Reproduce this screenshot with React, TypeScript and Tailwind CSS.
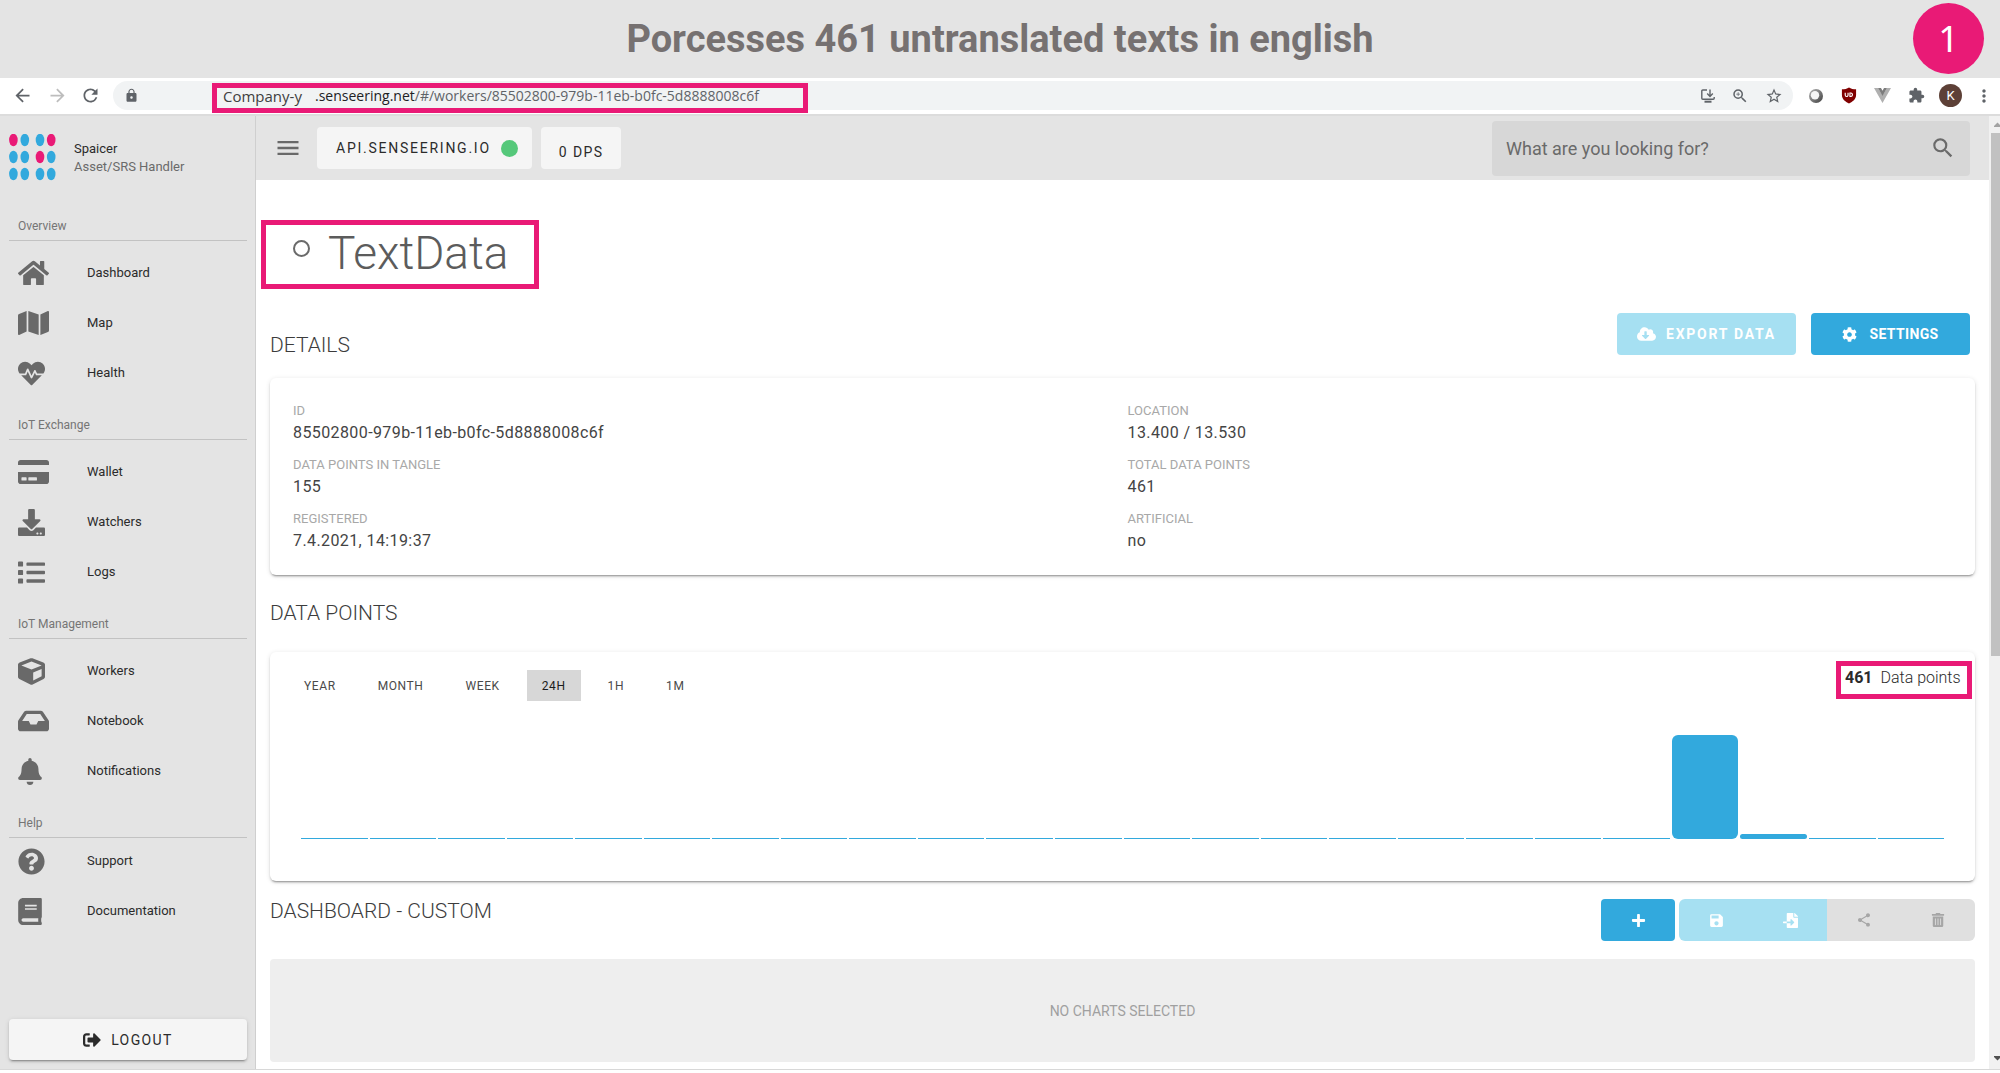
import React from "react";
import {
  FaBell,
  FaBook,
  FaCloudDownloadAlt,
  FaCog,
  FaCreditCard,
  FaCube,
  FaDownload,
  FaFileImport,
  FaHeartbeat,
  FaHome,
  FaInbox,
  FaList,
  FaMap,
  FaPlus,
  FaQuestionCircle,
  FaSignOutAlt,
  FaTrashAlt,
} from "react-icons/fa";
import {
  MdArrowBack,
  MdArrowForward,
  MdExtension,
  MdLock,
  MdMenu,
  MdMoreVert,
  MdRefresh,
  MdSave,
  MdSearch,
  MdShare,
  MdStarBorder,
  MdZoomIn,
} from "react-icons/md";
import type { IconType } from "react-icons";

const PINK = "#e91a76";
const BLUE = "#32a9dd";

type NavItem = { label: string; icon: IconType; size: string };
type NavSection = { title: string; items: NavItem[]; compact?: boolean };

// Icon boxes follow the three glyph proportions of the icon set
const WIDE = "h-[28px] w-[31px]";
const SQUARE = "h-[27px] w-[27px]";
const NARROW = "h-[27px] w-6";

const sections: NavSection[] = [
  {
    title: "Overview",
    items: [
      { label: "Dashboard", icon: FaHome, size: WIDE },
      { label: "Map", icon: FaMap, size: WIDE },
      { label: "Health", icon: FaHeartbeat, size: SQUARE },
    ],
  },
  {
    title: "IoT Exchange",
    items: [
      { label: "Wallet", icon: FaCreditCard, size: WIDE },
      { label: "Watchers", icon: FaDownload, size: SQUARE },
      { label: "Logs", icon: FaList, size: SQUARE },
    ],
  },
  {
    title: "IoT Management",
    items: [
      { label: "Workers", icon: FaCube, size: SQUARE },
      { label: "Notebook", icon: FaInbox, size: WIDE },
      { label: "Notifications", icon: FaBell, size: NARROW },
    ],
  },
  {
    title: "Help",
    compact: true,
    items: [
      { label: "Support", icon: FaQuestionCircle, size: SQUARE },
      { label: "Documentation", icon: FaBook, size: NARROW },
    ],
  },
];

const details = [
  ["ID", "85502800-979b-11eb-b0fc-5d8888008c6f"],
  ["LOCATION", "13.400 / 13.530"],
  ["DATA POINTS IN TANGLE", "155"],
  ["TOTAL DATA POINTS", "461"],
  ["REGISTERED", "7.4.2021, 14:19:37"],
  ["ARTIFICIAL", "no"],
];

const ranges = ["YEAR", "MONTH", "WEEK", "24H", "1H", "1M"];

// Bar heights in pixels, one per hour
const bars = Array.from({ length: 24 }, (_, i) => (i === 20 ? 104 : i === 21 ? 5 : 1));

function Logo() {
  const pink = ["0-0", "0-3", "1-2"];
  return (
    <svg viewBox="0 0 47 47" className="h-[47px] w-[47px]" aria-hidden="true">
      {[6, 23, 40].map((cy, r) =>
        [4.4, 15.8, 31, 42.2].map((cx, c) => (
          <ellipse
            key={`${r}-${c}`}
            cx={cx}
            cy={cy}
            rx="4.3"
            ry="6.2"
            fill={pink.includes(`${r}-${c}`) ? PINK : BLUE}
          />
        ))
      )}
    </svg>
  );
}

function InstallIcon() {
  return (
    <svg viewBox="0 0 14 14" className="h-3.5 w-3.5" fill="none" stroke="currentColor" strokeWidth="1.4">
      <path d="M6 1H1.8a1 1 0 0 0-1 1v7.3a1 1 0 0 0 1 1h10.4a1 1 0 0 0 1-1V8" />
      <path d="M9 .5v6.5M6.2 4.6 9 7.4l2.8-2.8" />
      <path d="M3.5 12.7h7" strokeWidth="2" />
    </svg>
  );
}

function OrbIcon() {
  return (
    <svg viewBox="0 0 16 16" className="h-4 w-4">
      <defs>
        <linearGradient id="orb" x1="0" y1="0" x2="1" y2="1">
          <stop offset="0" stopColor="#b5b5b5" />
          <stop offset="1" stopColor="#3f3f3f" />
        </linearGradient>
      </defs>
      <circle cx="8" cy="8" r="7" fill="url(#orb)" />
      <circle cx="7" cy="7.2" r="4.2" fill="#f5f5f5" />
    </svg>
  );
}

function ShieldIcon() {
  return (
    <svg viewBox="0 0 16 18" className="h-[17px] w-4" fill="none">
      <path d="M8 .5c2 1.4 4.6 2 7.5 2v6c0 4.5-3.5 7-7.5 9-4-2-7.5-4.5-7.5-9v-6c2.9 0 5.5-.6 7.5-2z" fill="#800000" />
      <path d="M4 6v2.6a1.5 1.5 0 0 0 3 0V6M9 6.3v3.7h1.2a1.9 1.9 0 0 0 0-3.7z" stroke="#fff" strokeWidth="1.2" />
    </svg>
  );
}

function VueIcon() {
  return (
    <svg viewBox="0 0 17 15" className="h-[15px] w-[17px]">
      <path d="M0 0h4l4.5 7.5L13 0h4L8.5 15z" fill="#b0b0b0" />
      <path d="M4 0h3l1.5 2.8L10 0h3L8.5 8z" fill="#7d7d7d" />
    </svg>
  );
}

function BrowserBar() {
  return (
    <div className="flex h-[38px] items-center border-b-2 border-[#dcdcdc] bg-white pb-px pl-3 pr-1.5 text-[#5f6368]">
      <button aria-label="Back" className="mr-3.5"><MdArrowBack className="h-[21px] w-[21px]" /></button>
      <button aria-label="Forward" className="mr-3 text-[#bdbdbd]"><MdArrowForward className="h-[21px] w-[21px]" /></button>
      <button aria-label="Reload" className="mr-3"><MdRefresh className="h-[21px] w-[21px]" /></button>
      <div className="relative flex h-[29px] min-w-0 flex-1 items-center rounded-full bg-[#f1f3f4] pl-2.5 pr-2.5">
        <MdLock className="h-[15px] w-[17px]" />
        <div className="absolute left-[99px] top-0.5 flex h-[30px] w-[596px] items-center border-[5px] border-[#e91a76] pb-1 pl-1.5 font-['Open_Sans',sans-serif] whitespace-nowrap">
          <span className="w-[92px] text-[15px] leading-5 text-[#404040]">Company-y</span>
          <span className="text-sm leading-5">
            <span className="text-[#202124]">.senseering.net</span>/#/workers/85502800-979b-11eb-b0fc-5d8888008c6f
          </span>
        </div>
        <div className="ml-auto flex items-center gap-4">
          <button aria-label="Install"><InstallIcon /></button>
          <button aria-label="Zoom"><MdZoomIn className="h-[18px] w-[18px]" /></button>
          <button aria-label="Bookmark"><MdStarBorder className="h-[18px] w-[18px]" /></button>
        </div>
      </div>
      <div className="ml-[15px] flex items-center gap-[17px]">
        <button aria-label="Orb extension"><OrbIcon /></button>
        <button aria-label="Shield extension"><ShieldIcon /></button>
        <button aria-label="Vue extension"><VueIcon /></button>
        <button aria-label="Extensions"><MdExtension className="h-[17px] w-[17px]" /></button>
      </div>
      <button aria-label="Profile" className="ml-3.5 flex h-[23px] w-[23px] items-center justify-center rounded-full bg-[#5d4037] text-[13px] text-white">K</button>
      <button aria-label="Menu" className="ml-3"><MdMoreVert className="h-5 w-5" /></button>
    </div>
  );
}

function Sidebar() {
  return (
    <nav className="flex w-64 shrink-0 flex-col border-r border-[#cfcfcf] bg-[#e4e4e4]">
      <div className="flex h-[83px] items-center pl-[9px]">
        <Logo />
        <div className="ml-[18px] text-[13px] leading-[18px]">
          <div className="text-[#2b2b2b]">Spaicer</div>
          <div className="text-[#6a6a6a]">Asset/SRS Handler</div>
        </div>
      </div>
      {sections.map((s) => (
        <section key={s.title}>
          <h3 className="ml-[9px] mr-2 flex h-[42px] items-end border-b border-[#c2c2c2] pb-1.5 pl-[9px] text-xs leading-4 text-[#757575]">
            {s.title}
          </h3>
          <ul className={s.compact ? "-mt-0.5" : "pt-[7px]"}>
            {s.items.map(({ label, icon: Icon, size }) => (
              <li key={label}>
                <a href={`#${label.toLowerCase()}`} className="flex h-[50px] items-center pl-[18px] text-[13px] text-[#2b2b2b]">
                  <span className="w-[69px] text-[#696969]">
                    <Icon className={size} />
                  </span>
                  {label}
                </a>
              </li>
            ))}
          </ul>
        </section>
      ))}
      <button className="mb-[9px] ml-[9px] mr-2 mt-auto flex h-[41px] items-center justify-center gap-2.5 rounded bg-[#f5f5f5] text-sm tracking-widest text-[#2b2b2b] shadow-[0_3px_1px_-2px_rgba(0,0,0,0.2),0_2px_2px_0_rgba(0,0,0,0.14),0_1px_5px_0_rgba(0,0,0,0.12)]">
        <FaSignOutAlt className="h-[18px] w-[18px]" />
        LOGOUT
      </button>
    </nav>
  );
}

function TopBar() {
  return (
    <header className="flex h-16 items-center bg-[#e4e4e4] pl-[18px] pr-[19px]">
      <button aria-label="Toggle menu" className="mr-[15px] text-[#696969]"><MdMenu className="h-7 w-7" /></button>
      <button className="flex h-[42px] items-center gap-2.5 rounded bg-[#f5f5f5] pl-[19px] pr-3.5 text-sm tracking-[0.125em] text-[#2b2b2b]">
        API.SENSEERING.IO
        <span className="h-[17px] w-[17px] rounded-full bg-[#55c87a]" />
      </button>
      <button className="ml-[9px] h-[42px] rounded bg-[#f5f5f5] px-[18px] pt-2 text-sm tracking-widest text-[#2b2b2b]">
        0 DPS
      </button>
      <div className="ml-auto flex h-[55px] w-[478px] items-center rounded bg-[#d7d7d7] pl-3.5 pr-3.5">
        <input
          type="text"
          aria-label="Search"
          placeholder="What are you looking for?"
          className="h-8 min-w-0 flex-1 bg-transparent text-lg outline-none placeholder:text-[#6a6a6a]"
        />
        <MdSearch className="h-[26px] w-[26px] text-[#6a6a6a]" />
      </div>
    </header>
  );
}

const card =
  "rounded-md bg-white shadow-[0_3px_1px_-2px_rgba(0,0,0,0.2),0_2px_2px_0_rgba(0,0,0,0.14),0_1px_5px_0_rgba(0,0,0,0.12)]";
const heading = "pb-0.5 text-[21px] font-light leading-7 text-[#3c3c3c]";

function Content() {
  return (
    <main className="px-3.5 pb-[7px] pt-10">
      <div className="-ml-[9px] flex h-[69px] w-[278px] items-center border-[5px] border-[#e91a76] pb-1 pl-[27px]">
        <span className="mb-2 h-[17px] w-[17px] rounded-full border-2 border-[#6a6a6a]" />
        <h1 className="ml-[18px] text-[46px] font-light leading-none text-[#5c5c5c]">TextData</h1>
      </div>

      <div className="mt-6 flex h-[65px] items-center">
        <h2 className={heading}>DETAILS</h2>
        <div className="ml-auto mr-[5px] flex gap-[15px] self-start">
          <button disabled className="flex h-[42px] w-[179px] items-center justify-center gap-2.5 rounded bg-[#a6e0f2] text-sm font-bold tracking-[0.125em] text-white">
            <FaCloudDownloadAlt className="h-[18px] w-[19px]" />
            EXPORT DATA
          </button>
          <button className="flex h-[42px] w-[159px] items-center justify-center gap-3 rounded bg-[#32a9dd] text-sm font-bold tracking-wide text-white">
            <FaCog className="h-[15px] w-[15px]" />
            SETTINGS
          </button>
        </div>
      </div>

      <dl className={`${card} grid h-[197px] grid-cols-2 content-start gap-y-3 px-[18px] pt-6`}>
        {details.map(([k, v]) => (
          <div key={k} className="pl-[5px]">
            <dt className="mb-0.5 text-[13px] leading-[18px] text-[#a8a8a8]">{k}</dt>
            <dd className="text-base leading-[22px] tracking-wide text-[#444444]">{v}</dd>
          </div>
        ))}
      </dl>

      <div className="flex h-[77px] items-center">
        <h2 className={heading}>DATA POINTS</h2>
      </div>

      <section className={`${card} relative h-[229px] px-[31px] pt-[18px]`}>
        <div className="-ml-3 flex gap-3">
          {ranges.map((r) => (
            <button
              key={r}
              aria-pressed={r === "24H"}
              className={
                r === "24H"
                  ? "h-[31px] bg-[#d7d7d7] px-[15px] text-xs tracking-wider text-[#1c1c1c]"
                  : "h-[31px] px-[15px] text-xs tracking-wider text-[#4a4a4a]"
              }
            >
              {r}
            </button>
          ))}
        </div>
        <div className="mt-8 flex h-[106px] items-end gap-0.5">
          {bars.map((h, i) => (
            <div key={i} className="flex-1 rounded-md bg-[#32a9dd]" style={{ height: h, borderRadius: h > 1 ? undefined : 0 }} />
          ))}
        </div>
        <p className="absolute right-[3px] top-[9px] h-[38px] w-[136px] border-[5px] border-[#e91a76] pl-1 pt-0.5 text-base font-light leading-5 whitespace-nowrap text-[#2b2b2b]">
          <b className="mr-1 font-bold">461</b> Data points
        </p>
      </section>

      <div className="flex h-[78px] items-start pt-4">
        <h2 className={heading}>DASHBOARD - CUSTOM</h2>
        <div className="ml-auto mt-0.5 flex h-[42px] gap-1">
          <button aria-label="Add chart" className="flex w-[74px] items-center justify-center rounded bg-[#32a9dd] text-white">
            <FaPlus className="h-[15px] w-[15px]" />
          </button>
          <div className="flex overflow-hidden rounded-md">
            <button disabled aria-label="Save" className="flex w-[74px] items-center justify-center bg-[#a6e0f2] text-white">
              <MdSave className="h-[17px] w-[17px]" />
            </button>
            <button disabled aria-label="Import" className="flex w-[74px] items-center justify-center bg-[#a6e0f2] text-white">
              <FaFileImport className="h-[15px] w-[15px]" />
            </button>
            <button disabled aria-label="Share" className="flex w-[74px] items-center justify-center bg-[#e0e0e0] text-[#a6a6a6]">
              <MdShare className="h-4 w-4" />
            </button>
            <button disabled aria-label="Delete" className="flex w-[74px] items-center justify-center bg-[#e0e0e0] text-[#a6a6a6]">
              <FaTrashAlt className="h-3.5 w-3.5" />
            </button>
          </div>
        </div>
      </div>

      <div className="flex h-[103px] items-center justify-center rounded-sm bg-[#eeeeee] text-sm text-[#a0a0a0]">
        NO CHARTS SELECTED
      </div>
    </main>
  );
}

function Scrollbar() {
  return (
    <div className="flex w-[11px] shrink-0 flex-col items-end overflow-hidden bg-[#f1f1f1]" aria-hidden="true">
      <svg viewBox="0 0 6 17" className="h-[17px] w-1.5"><path d="M-1 11h9L3.5 6.5z" fill="#a3a3a3" /></svg>
      <div className="h-[523px] w-[9px] bg-[#c1c1c1]" />
      <svg viewBox="0 0 6 17" className="mb-1 mt-auto h-[17px] w-1.5"><path d="M-1 8h9l-4.5 4.5z" fill="#505050" /></svg>
    </div>
  );
}

export default function App() {
  return (
    <div className="flex min-h-screen flex-col bg-white font-['Roboto',sans-serif]">
      <div className="relative flex h-[78px] items-center justify-center bg-[#e4e4e4]">
        <p className="text-[38px] font-bold leading-none text-[#767171]">Porcesses 461 untranslated texts in english</p>
        <span className="absolute right-4 top-[3px] flex h-[71px] w-[71px] items-center justify-center rounded-full bg-[#e91a76] font-['Noto_Sans',sans-serif] text-4xl text-white">
          1
        </span>
      </div>
      <BrowserBar />
      <div className="mb-[3px] flex flex-1 border-b border-[#d8d8d8]">
        <Sidebar />
        <div className="min-w-0 flex-1">
          <TopBar />
          <Content />
        </div>
        <Scrollbar />
      </div>
    </div>
  );
}
